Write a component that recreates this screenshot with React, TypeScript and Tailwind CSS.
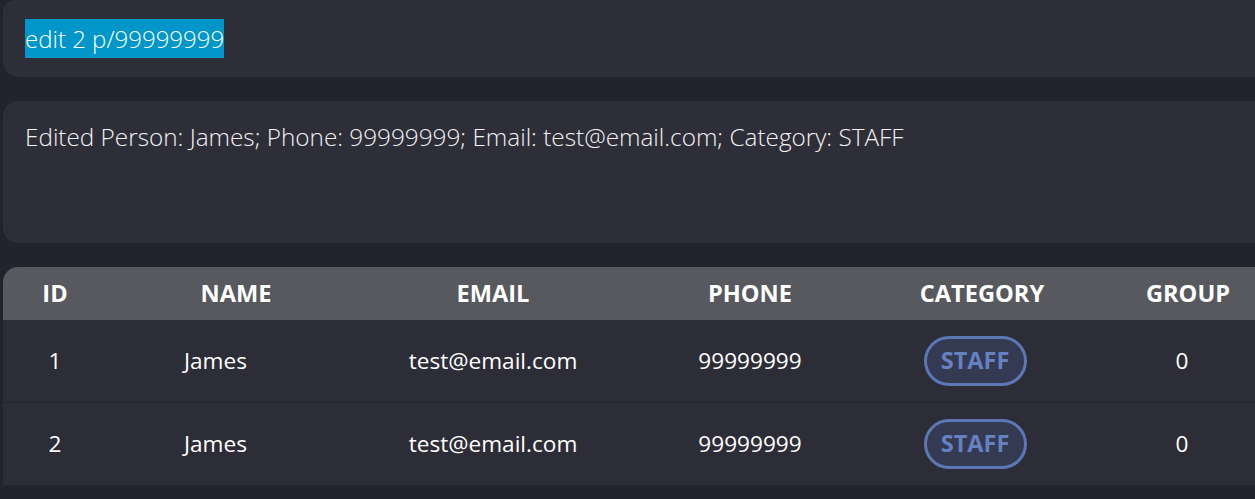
const people = [
  { id: 1, name: "James", email: "test@email.com", phone: "99999999", category: "STAFF", group: 0 },
  { id: 2, name: "James", email: "test@email.com", phone: "99999999", category: "STAFF", group: 0 },
];

const cols = "grid grid-cols-[104px_258px_256px_258px_206px_206px]";

export default function App() {
  return (
    <div
      className="h-[499px] w-[1255px] overflow-hidden bg-[#23232d] pl-[3px] text-white"
      style={{ fontFamily: '"Open Sans", "Noto Sans", sans-serif' }}
    >
      {/* command box */}
      <div className="flex h-[77px] w-[1280px] items-center rounded-b-[15px] rounded-t-[12px] bg-[#2e2e39] pl-[22px]">
        <span className="bg-[#0096c9] text-[24px] font-light leading-[39px] text-white">
          edit 2 p/99999999
        </span>
      </div>

      {/* result box */}
      <div className="mt-[24px] h-[142px] w-[1280px] rounded-[15px] bg-[#2e2e39] px-[22px] pt-[19px]">
        <p className="text-[24.3px] font-light leading-[34px] text-[#f2f2f2]">
          Edited Person: James; Phone: 99999999; Email: test@email.com; Category: STAFF
        </p>
      </div>

      {/* person table */}
      <div className="mt-[24px] w-[1290px] overflow-hidden rounded-tl-[15px]">
        <div className={`${cols} h-[53px] items-center bg-[#58595e] text-center text-[23.6px] font-bold`}>
          <div>ID</div>
          <div>NAME</div>
          <div>EMAIL</div>
          <div>PHONE</div>
          <div>CATEGORY</div>
          <div>GROUP</div>
        </div>
        {people.map((p, i) => (
          <div
            key={p.id}
            className={`${cols} h-[82px] items-center bg-[#2d2d37] text-[22.6px] ${i > 0 ? "mt-px" : ""}`}
          >
            <div className="text-center">{p.id}</div>
            <div className="pl-[77px]">{p.name}</div>
            <div className="text-center">{p.email}</div>
            <div className="text-center">{p.phone}</div>
            <div className="flex justify-center pr-[14px]">
              <span className="flex h-[50px] w-[103px] items-center justify-center rounded-full border-[3px] border-[#5b77b5] bg-[#343a52] text-[23.5px] font-bold text-[#6581c2]">
                {p.category}
              </span>
            </div>
            <div className="pr-[12px] text-center">{p.group}</div>
          </div>
        ))}
      </div>
    </div>
  );
}
